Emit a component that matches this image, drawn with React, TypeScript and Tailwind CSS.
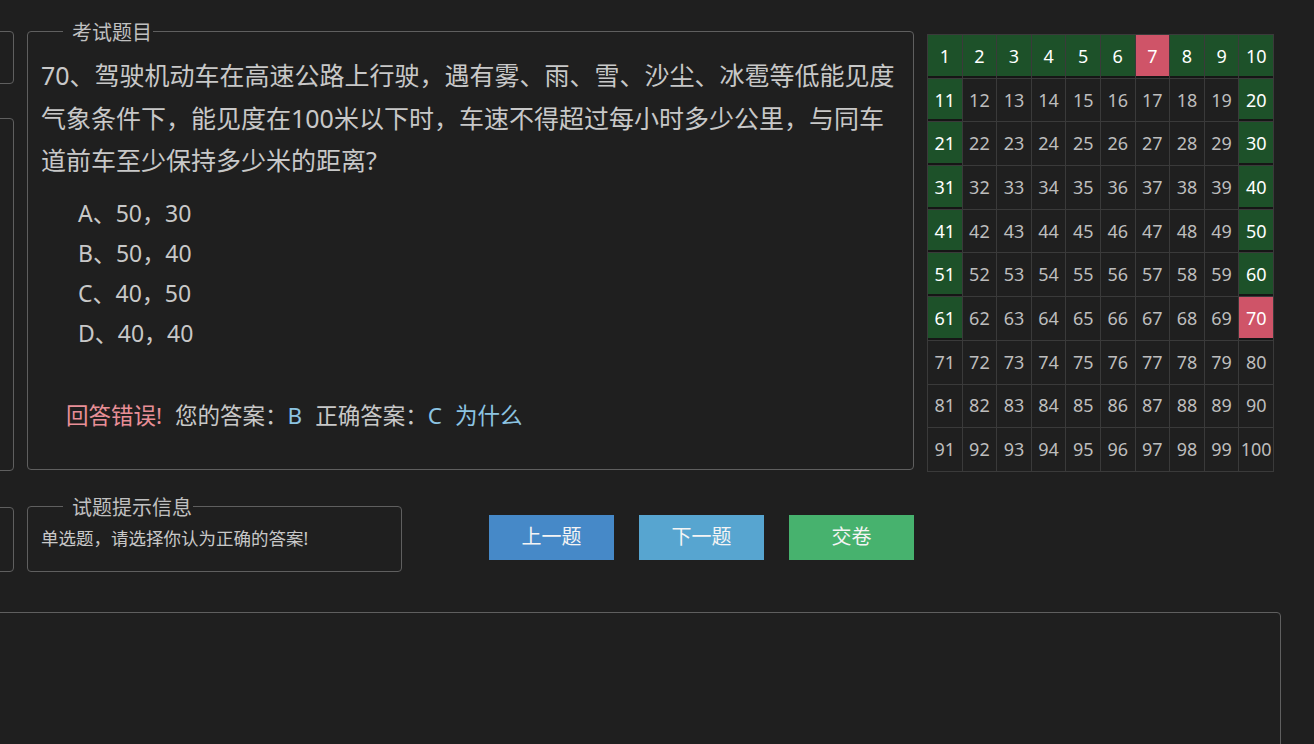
import { FC } from "react";

const GREEN = [1, 2, 3, 4, 5, 6, 8, 9, 10, 11, 20, 21, 30, 31, 40, 41, 50, 51, 60, 61];
const RED = [7, 70];

const options = ["A、50，30", "B、50，40", "C、40，50", "D、40，40"];

const AnswerGrid: FC = () => {
  const rows = Array.from({ length: 10 }, (_, r) =>
    Array.from({ length: 10 }, (_, c) => r * 10 + c + 1)
  );

  const cellClass = (n: number) => {
    if (RED.includes(n)) {
      return "bg-[#cf5468] text-white shadow-[inset_0_-2px_0_#161616]";
    }
    if (GREEN.includes(n)) {
      return "bg-[#1d5129] text-white shadow-[inset_0_-2px_0_#161616]";
    }
    return "text-[#bdbdbd]";
  };

  return (
    <table className="mt-[16px] w-[347px] table-fixed border-collapse border border-[#3a3a3a] text-[18px]">
      <tbody>
        {rows.map((row, index) => (
          <tr key={index}>
            {row.map((n) => (
              <td
                key={n}
                className={`h-[43.7px] border border-[#3a3a3a] p-0 text-center ${cellClass(n)}`}
              >
                {n}
              </td>
            ))}
          </tr>
        ))}
      </tbody>
    </table>
  );
};

export default function App() {
  return (
    <div className="min-h-[744px] overflow-hidden bg-[#1f1f1f] font-['Noto_Sans','Noto_Sans_CJK_SC',sans-serif] text-[#c8c8c8]">
      <div className="-ml-[186px] w-[1500px] pt-[18px]">
        {/* top row */}
        <div className="flex items-start gap-[13px]">
          <div className="flex w-[200px] flex-col gap-[34px] pt-[13px]">
            <div className="h-[53px] rounded border border-[#5f5f5f]" />
            <div className="h-[353px] rounded border border-[#5f5f5f]" />
          </div>

          <fieldset className="h-[452px] w-[887px] rounded border border-[#5f5f5f] px-[13px]">
            <legend className="ml-[22px] pl-[9px] pr-[1px] text-[20px] leading-[26px] text-[#c0c0c0]">
              <span className="relative top-[2px]">考试题目</span>
            </legend>
            <p className="pt-[10px] text-[25px] leading-[42.5px]">
              70、驾驶机动车在高速公路上行驶，遇有雾、雨、雪、沙尘、冰雹等低能见度气象条件下，能见度在100米以下时，车速不得超过每小时多少公里，与同车道前车至少保持多少米的距离?
            </p>
            <div className="mt-[11px] pl-[37px] text-[23px] leading-[40px]">
              {options.map((option) => (
                <div key={option}>{option}</div>
              ))}
            </div>
            <div className="mt-[43px] flex gap-[13px] pl-[25px] text-[22.5px] leading-[40px]">
              <span className="text-[#e88f97]">回答错误!</span>
              <span>
                您的答案：<span className="text-[#8cc4e2]">B</span>
              </span>
              <span>
                正确答案：<span className="text-[#8cc4e2]">C</span>
              </span>
              <span className="text-[#8cc4e2]">为什么</span>
            </div>
          </fieldset>

          <AnswerGrid />
        </div>

        {/* hint + buttons */}
        <div className="mt-[22px] flex items-start gap-[13px]">
          <div className="mt-[13px] h-[65px] w-[200px] rounded border border-[#5f5f5f]" />
          <fieldset className="h-[78px] w-[375px] rounded border border-[#5f5f5f] px-[13px]">
            <legend className="ml-[22px] pl-[9px] pr-[1px] text-[20px] leading-[26px] text-[#c0c0c0]">
              <span className="relative top-[1px]">试题提示信息</span>
            </legend>
            <p className="pt-[6px] text-[17.5px] leading-[24px]">单选题，请选择你认为正确的答案!</p>
          </fieldset>
          <div className="ml-[74px] mt-[21px] flex gap-[25px] text-[20px] text-[#f4f4f4]">
            <button className="h-[45px] w-[125px] bg-[#4689c8]">上一题</button>
            <button className="h-[45px] w-[125px] bg-[#57a5d0]">下一题</button>
            <button className="h-[45px] w-[125px] bg-[#47b26e]">交卷</button>
          </div>
        </div>

        {/* bottom panel */}
        <div className="mt-[40px] h-[200px] w-[1467px] rounded border border-[#5f5f5f]" />
      </div>
    </div>
  );
}
